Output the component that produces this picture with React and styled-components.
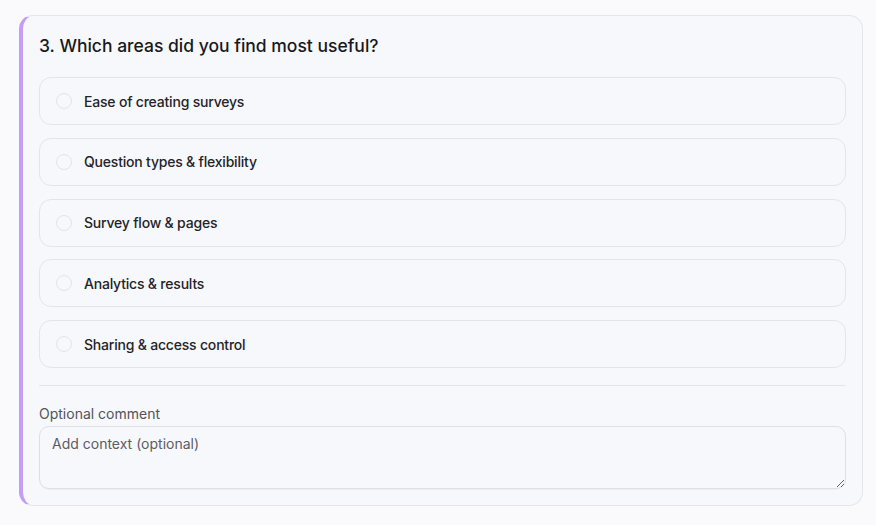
import styled, { createGlobalStyle } from "styled-components";

const options = [
  "Ease of creating surveys",
  "Question types & flexibility",
  "Survey flow & pages",
  "Analytics & results",
  "Sharing & access control",
];

export default function App() {
  return (
    <>
      <GlobalStyle />
      <StyledPage>
        <StyledCard>
          <StyledTitle>3. Which areas did you find most useful?</StyledTitle>
          <StyledList>
            {options.map((label) => (
              <StyledOption key={label}>
                <StyledRadio type="radio" name="areas" />
                <span>{label}</span>
              </StyledOption>
            ))}
          </StyledList>
          <StyledDivider />
          <StyledLabel htmlFor="comment">Optional comment</StyledLabel>
          <StyledTextarea id="comment" placeholder="Add context (optional)" />
        </StyledCard>
      </StyledPage>
    </>
  );
}

const GlobalStyle = createGlobalStyle`
  * { box-sizing: border-box; }
  body {
    margin: 0;
    background: #fafafc;
    font-family: Inter, "Liberation Sans", sans-serif;
    color: #1b1c20;
  }
`;

const StyledPage = styled.div`
  padding: 15px 13px 18px 19px;
`;

const StyledCard = styled.section`
  display: flex;
  flex-direction: column;
  background: #f7f8fb;
  border: 1px solid #e5e6eb;
  border-left: 4px solid #c49ef4;
  border-radius: 14px;
  padding: 16px;
`;

const StyledTitle = styled.h2`
  margin: 0 0 17px;
  font-size: 17.5px;
  line-height: 28px;
  font-weight: 500;
  color: #18191d;
`;

const StyledList = styled.div`
  display: flex;
  flex-direction: column;
  gap: 12.75px;
`;

const StyledOption = styled.label`
  display: flex;
  align-items: center;
  gap: 12px;
  height: 48px;
  padding: 0 16px;
  border: 1px solid #e4e5ea;
  border-radius: 12px;
  background: #f7f8fb;
  font-size: 14px;
  font-weight: 500;
  letter-spacing: -0.2px;
  color: #232428;
  cursor: pointer;
`;

const StyledRadio = styled.input`
  appearance: none;
  margin: 0;
  width: 16px;
  height: 16px;
  border: 1.5px solid #e3e4e9;
  border-radius: 50%;
  background: #f7f8fb;
`;

const StyledDivider = styled.hr`
  margin: 17px 0 0;
  border: none;
  border-top: 1px solid #e4e5ea;
`;

const StyledLabel = styled.label`
  margin-top: 18px;
  margin-bottom: 2px;
  font-size: 14px;
  line-height: 20px;
  color: #52535a;
`;

const StyledTextarea = styled.textarea`
  height: 63px;
  padding: 7px 12px;
  border: 1px solid #dfe0e5;
  border-radius: 10px;
  background: #f7f8fb;
  font-family: Inter, "Liberation Sans", sans-serif;
  font-size: 14px;
  line-height: 20px;
  color: #1b1c20;
  resize: vertical;
  box-shadow: 0 1px 1px rgba(0, 0, 0, 0.04);
  &::placeholder {
    color: #5b5c63;
  }
`;
